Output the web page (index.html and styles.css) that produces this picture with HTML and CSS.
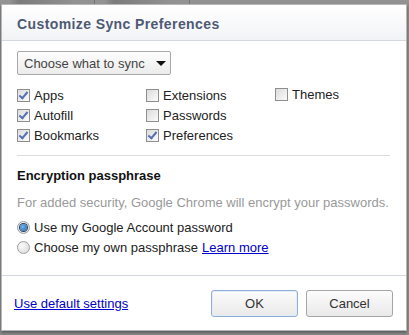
FILE: index.html
```html
<!DOCTYPE html>
<html lang="en">
<head>
    <meta charset="UTF-8">
    <title>Customize Sync Preferences</title>
    <link rel="stylesheet" href="styles.css">
</head>
<body>
    <div class="backdrop">
        <span class="ghost-tab"></span>
        <span class="ghost-tab"></span>
    </div>

    <div class="dialog">
        <div class="dialog-header">
            <h1>Customize Sync Preferences</h1>
        </div>

        <div class="dialog-body">
            <button class="select-btn">Choose what to sync <span class="arrow"></span></button>

            <div class="sync-grid">
                <div class="col">
                    <label class="check"><span class="box on"></span>Apps</label>
                    <label class="check"><span class="box on"></span>Autofill</label>
                    <label class="check"><span class="box on"></span>Bookmarks</label>
                </div>
                <div class="col">
                    <label class="check"><span class="box"></span>Extensions</label>
                    <label class="check"><span class="box"></span>Passwords</label>
                    <label class="check"><span class="box on"></span>Preferences</label>
                </div>
                <div class="col col-up">
                    <label class="check"><span class="box"></span>Themes</label>
                </div>
            </div>

            <div class="divider"></div>

            <h2>Encryption passphrase</h2>
            <p class="note">For added security, Google Chrome will encrypt your passwords.</p>

            <label class="radio"><span class="dot on"></span>Use my Google Account password</label>
            <label class="radio"><span class="dot"></span>Choose my own passphrase <a href="#">Learn more</a></label>
        </div>

        <div class="dialog-footer">
            <a href="#" class="default-link">Use default settings</a>
            <div class="actions">
                <button class="btn btn-focus">OK</button>
                <button class="btn">Cancel</button>
            </div>
        </div>
    </div>
</body>
</html>
```

FILE: styles.css
```css
* {
    margin: 0;
    padding: 0;
    box-sizing: border-box;
}

body {
    width: 409px;
    height: 335px;
    overflow: hidden;
    background: #8d8d8d;
    font-family: 'Liberation Sans', Arial, sans-serif;
    font-size: 13px;
    color: #222;
}

/* page behind the dialog, only a sliver shows */
.backdrop {
    height: 4px;
    display: flex;
    overflow: hidden;
    background: #939393;
}

.ghost-tab {
    width: 95px;
    margin-left: 0;
    border-right: 1px solid #777;
    background: linear-gradient(90deg, #939393 10%, #7c7c7c 20%, #8a8a8a 60%, #939393 80%);
}

.dialog {
    margin: 0 2px 0 1px;
    width: 406px;
    height: 327px;
    background: #fff;
    border: 1px solid #b7b7b7;
    display: flex;
    flex-direction: column;
    box-shadow: 0 2px 3px rgba(0, 0, 0, 0.35);
}

.dialog-header {
    height: 36px;
    background: linear-gradient(#ffffff, #f2f3f6);
    border-bottom: 1px solid #d3d7e0;
    padding: 10px 15px 0;
}

h1 {
    font-size: 14px;
    font-weight: bold;
    color: #4e5a74;
    letter-spacing: 0.4px;
    line-height: 18px;
}

.dialog-body {
    padding: 10px 15px 0;
}

.select-btn {
    display: flex;
    align-items: center;
    gap: 11px;
    width: 154px;
    height: 24px;
    padding: 0 0 0 6px;
    font-family: inherit;
    font-size: 13px;
    color: #444;
    background: linear-gradient(#fdfdfd, #ececec);
    border: 1px solid #a9a9a9;
    border-radius: 2px;
}

.arrow {
    width: 0;
    height: 0;
    border-left: 5px solid transparent;
    border-right: 5px solid transparent;
    border-top: 5px solid #111;
}

.sync-grid {
    display: grid;
    grid-template-columns: 129px 129px 1fr;
    margin-top: 10px;
}

.col-up {
    margin-top: -1px;
}

.check,
.radio {
    display: flex;
    align-items: center;
    height: 20px;
    white-space: nowrap;
}

.box {
    width: 13px;
    height: 13px;
    margin-right: 4px;
    border: 1px solid #8f8f8f;
    background: linear-gradient(135deg, #dcdcdc, #fbfbfb);
    position: relative;
}

.box.on::after {
    content: "";
    position: absolute;
    left: 3px;
    top: 0;
    width: 3px;
    height: 7px;
    border-right: 2px solid #5570b0;
    border-bottom: 2px solid #5570b0;
    transform: rotate(40deg);
}

.divider {
    height: 1px;
    background: #dcdcdc;
    margin: 10px 1px 0 0;
}

h2 {
    font-size: 13px;
    font-weight: bold;
    color: #111;
    line-height: 20px;
    margin-top: 10px;
}

.note {
    color: #999;
    line-height: 20px;
    margin-top: 7px;
}

.radio:first-of-type {
    margin-top: 4px;
}

.dot {
    width: 13px;
    height: 13px;
    margin-right: 4px;
    border-radius: 50%;
    border: 1px solid #a0a0a0;
    background: radial-gradient(circle at 35% 35%, #fafafa, #d6d6d6);
    position: relative;
}

.dot.on::after {
    content: "";
    position: absolute;
    left: 2px;
    top: 2px;
    width: 7px;
    height: 7px;
    border-radius: 50%;
    background: radial-gradient(circle at 40% 40%, #6fb6ee, #1f5fa6);
    box-shadow: 0 0 0 1px #2b3f5c;
}

.radio a,
.default-link {
    color: #0000cc;
    text-decoration: underline;
    margin-left: 4px;
}

.dialog-footer {
    margin-top: auto;
    height: 55px;
    border-top: 1px solid #d3d7e0;
    display: flex;
    align-items: center;
    justify-content: space-between;
    padding: 0 13px 0 12px;
}

.default-link {
    margin-left: 0;
}

.actions {
    display: flex;
    gap: 8px;
}

.btn {
    width: 87px;
    height: 27px;
    font-family: inherit;
    font-size: 13px;
    color: #333;
    background: linear-gradient(#fcfcfc, #e9e9e9);
    border: 1px solid #a6a6a6;
    border-radius: 3px;
}

.btn-focus {
    border-color: #8eaed6;
    box-shadow: inset 0 0 0 1px #e4eefa;
}
```
